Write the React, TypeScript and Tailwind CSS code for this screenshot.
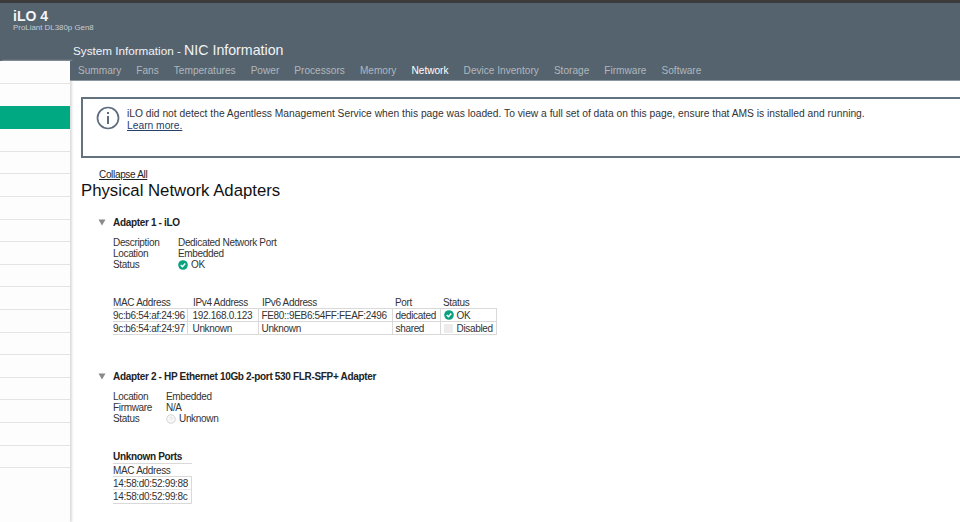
const font = "font-['Liberation_Sans',Arial,sans-serif]";

function OkIcon() {
  return (
    <svg width="10" height="10" viewBox="0 0 11 11" className="shrink-0">
      <circle cx="5.5" cy="5.5" r="5.3" fill="#0aa17f" />
      <path d="M3 5.6 L4.9 7.4 L8 3.9" fill="none" stroke="#fff" strokeWidth="1.6" />
    </svg>
  );
}

function Triangle() {
  return (
    <svg width="8" height="7" viewBox="0 0 8 7" className="shrink-0">
      <path d="M0.5 0.5 H7.5 L4 6.5 Z" fill="#8a8a8a" />
    </svg>
  );
}

function InfoIcon() {
  return (
    <svg width="24" height="24" viewBox="0 0 24 24" className="shrink-0">
      <circle cx="12" cy="12" r="10.5" fill="none" stroke="#5d6d7e" strokeWidth="1.7" />
      <rect x="11" y="6" width="2" height="2" fill="#5d6d7e" />
      <rect x="11" y="10" width="2" height="8" fill="#5d6d7e" />
    </svg>
  );
}

function UnknownIcon() {
  return (
    <svg width="10" height="10" viewBox="0 0 10 10" className="shrink-0">
      <circle cx="5" cy="5" r="4.3" fill="#f7f7f7" stroke="#d6d6d6" strokeWidth="1" />
      <path d="M3.8 4 C4 2.8 6.2 2.8 6.2 4 C6.2 4.9 5 4.9 5 5.9" fill="none" stroke="#dcdcdc" strokeWidth="0.8" />
    </svg>
  );
}

const tabs = ["Summary", "Fans", "Temperatures", "Power", "Processors", "Memory", "Network", "Device Inventory", "Storage", "Firmware", "Software"];
const sideRows = Array.from({ length: 18 }, (_, i) => i);

function Adapter({ title }: { title: string }) {
  return (
    <div className="flex items-center h-[12px] pl-[28px] gap-[7px]">
      <Triangle />
      <span className="font-bold text-[#222]">{title}</span>
    </div>
  );
}

const td = "border border-[#d9d9d9] px-[3px] h-[13px] leading-[11px] whitespace-nowrap p-0";
const th = "font-normal text-left leading-[11px] h-[11px] whitespace-nowrap";

export default function App() {
  return (
    <div className={`${font} w-[960px] h-[522px] overflow-hidden bg-white flex flex-col text-[10px] tracking-[-0.33px] leading-[11px] text-[#333]`}>
      <div className="h-[3px] bg-[#3b3b3c] shrink-0" />
      <div className="h-[58px] bg-[#55636f] shrink-0 flex flex-col tracking-normal">
        <div className="pl-[13px] pt-[6px]">
          <div className="text-[#f4f5f6] font-bold text-[14px] leading-[14px]">iLO 4</div>
          <div className="text-[#c5ccd2] text-[7.9px] leading-[9px]">ProLiant DL380p Gen8</div>
        </div>
        <div className="pl-[73px] mt-[13px] text-[#f2f4f5] flex items-baseline h-[19px]">
          <span className="text-[11.7px] whitespace-pre">System Information - </span>
          <span className="text-[14.2px]">NIC Information</span>
        </div>
      </div>
      <div className="flex flex-1 min-h-0">
        <div className="w-[70px] shrink-0 flex flex-col bg-[#fdfdfd] shadow-[2px_0_2px_#dcdcdc]">
          {sideRows.map((i) => (
            <div
              key={i}
              className={
                i === 2
                  ? "h-[23px] shrink-0 bg-[#01a982]"
                  : i === 1
                    ? "h-[22.6px] shrink-0"
                    : "h-[22.6px] shrink-0 border-b border-[#e4e4e4]"
              }
            />
          ))}
        </div>
        <div className="flex-1 min-w-0 flex flex-col">
          <div className="h-[20px] shrink-0 bg-[#55636f] border-b border-[#8b96a0] flex items-center pl-[8px] gap-[15.1px] text-[10.1px] tracking-normal">
            {tabs.map((t) => (
              <span key={t} className={t === "Network" ? "text-white whitespace-nowrap" : "text-[#b0b7bd] whitespace-nowrap"}>
                {t}
              </span>
            ))}
          </div>
          <div className="flex-1 min-h-0">
            <div className="ml-[11px] mt-[16px] h-[61px] w-[900px] border-2 border-[#62727f] border-r-0 flex pl-[13px] pt-[7px] gap-[7px]">
              <InfoIcon />
              <div className="pt-[2px] text-[10.27px] leading-[12px] whitespace-nowrap text-[#333] tracking-normal">
                <div>iLO did not detect the Agentless Management Service when this page was loaded. To view a full set of data on this page, ensure that AMS is installed and running.</div>
                <div className="underline text-[#24406b]">Learn more.</div>
              </div>
            </div>
            <div className="ml-[29px] mt-[11px] underline text-[#222] leading-[11px]">Collapse All</div>
            <div className="ml-[11px] mt-[1px] text-[16.75px] leading-[20px] text-[#111] tracking-normal">Physical Network Adapters</div>

            <div className="mt-[15px]"><Adapter title="Adapter 1 - iLO" /></div>
            <div className="ml-[43px] mt-[9px] flex">
              <div className="w-[65px]">
                <div>Description</div>
                <div>Location</div>
                <div>Status</div>
              </div>
              <div>
                <div>Dedicated Network Port</div>
                <div>Embedded</div>
                <div className="flex items-center gap-[3px]"><OkIcon />OK</div>
              </div>
            </div>
            <table className="ml-[43px] mt-[27px] border-collapse table-fixed w-[383px]">
              <colgroup>
                <col className="w-[74px]" />
                <col className="w-[71px]" />
                <col className="w-[134px]" />
                <col className="w-[48px]" />
                <col className="w-[56px]" />
              </colgroup>
              <thead>
                <tr>
                  <th className={th}>MAC Address</th>
                  <th className={`${th} pl-[6px]`}>IPv4 Address</th>
                  <th className={`${th} pl-[4px]`}>IPv6 Address</th>
                  <th className={`${th} pl-[3px]`}>Port</th>
                  <th className={`${th} pl-[3px]`}>Status</th>
                </tr>
              </thead>
              <tbody>
                <tr>
                  <td className={`${td} border-l-0 !pl-0`}>9c:b6:54:af:24:96</td>
                  <td className={`${td} !pl-[5px]`}>192.168.0.123</td>
                  <td className={td}>FE80::9EB6:54FF:FEAF:2496</td>
                  <td className={td}>dedicated</td>
                  <td className={td}><span className="flex items-center gap-[3px]"><OkIcon />OK</span></td>
                </tr>
                <tr>
                  <td className={`${td} border-l-0 !pl-0`}>9c:b6:54:af:24:97</td>
                  <td className={`${td} !pl-[5px]`}>Unknown</td>
                  <td className={td}>Unknown</td>
                  <td className={td}>shared</td>
                  <td className={td}><span className="flex items-center gap-[4px]"><span className="w-[9px] h-[9px] bg-[#ececec] shrink-0" />Disabled</span></td>
                </tr>
              </tbody>
            </table>

            <div className="mt-[35px]"><Adapter title="Adapter 2 - HP Ethernet 10Gb 2-port 530 FLR-SFP+ Adapter" /></div>
            <div className="ml-[43px] mt-[9px] flex">
              <div className="w-[53px]">
                <div>Location</div>
                <div>Firmware</div>
                <div>Status</div>
              </div>
              <div>
                <div>Embedded</div>
                <div>N/A</div>
                <div className="flex items-center gap-[3px]"><UnknownIcon />Unknown</div>
              </div>
            </div>
            <div className="ml-[43px] mt-[27px] w-[79px] font-bold text-[#222] border-b border-[#d9d9d9] h-[13px]">Unknown Ports</div>
            <div className="ml-[43px] mt-[1px]">MAC Address</div>
            <div className="ml-[43px] w-[79px] border border-[#d9d9d9] border-l-0">
              <div className="h-[13px] leading-[13px] border-b border-[#e5e5e5]">14:58:d0:52:99:88</div>
              <div className="h-[13px] leading-[13px]">14:58:d0:52:99:8c</div>
            </div>
          </div>
        </div>
      </div>
    </div>
  );
}
